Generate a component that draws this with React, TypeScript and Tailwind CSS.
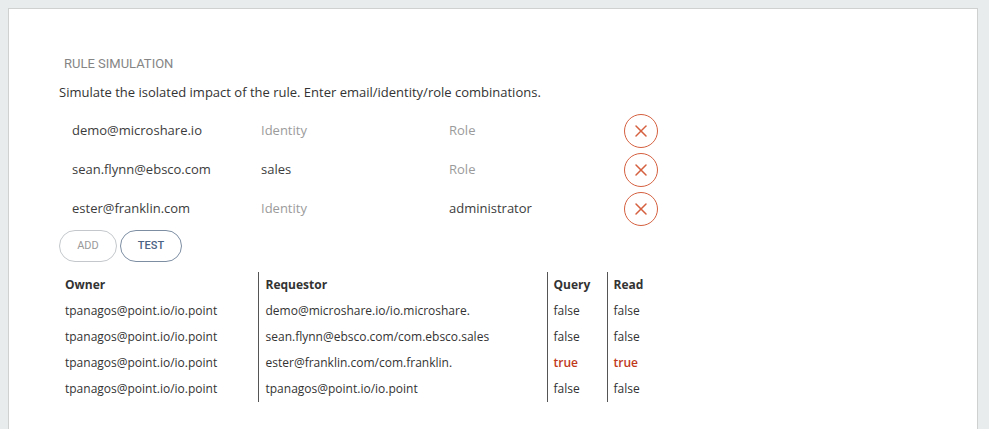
import { X } from 'lucide-react';

interface SimRow {
    email: string;
    identity: string;
    role: string;
}

const simRows: SimRow[] = [
    { email: 'demo@microshare.io', identity: '', role: '' },
    { email: 'sean.flynn@ebsco.com', identity: 'sales', role: '' },
    { email: 'ester@franklin.com', identity: '', role: 'administrator' },
];

const results = [
    { owner: 'tpanagos@point.io/io.point', requestor: 'demo@microshare.io/io.microshare.', query: false, read: false },
    { owner: 'tpanagos@point.io/io.point', requestor: 'sean.flynn@ebsco.com/com.ebsco.sales', query: false, read: false },
    { owner: 'tpanagos@point.io/io.point', requestor: 'ester@franklin.com/com.franklin.', query: true, read: true },
    { owner: 'tpanagos@point.io/io.point', requestor: 'tpanagos@point.io/io.point', query: false, read: false },
];

function Field({ value, placeholder, width }: { value: string; placeholder: string; width: string }) {
    return (
        <div className={`${width} shrink-0 ${value ? 'text-[#3c3c3c]' : 'text-[#9b9b9b]'}`}>
            {value || placeholder}
        </div>
    );
}

function BoolCell({ value }: { value: boolean }) {
    return <span className={value ? 'text-[#c0391b] font-semibold' : ''}>{value ? 'true' : 'false'}</span>;
}

export default function App() {
    return (
        <div className="min-h-[429px] h-[429px] overflow-hidden bg-[#e9ecec] pt-[8px] pl-[8px] pr-[11px] font-['Open_Sans',sans-serif]">
            <div className="h-[440px] border border-[#cfd1d1] bg-white pl-[50px] pt-[47px]">
                {/* Header */}
                <div className="ml-[5px] font-['Roboto',sans-serif] text-[13px] leading-[16px] text-[#858585] uppercase">
                    Rule Simulation
                </div>
                <p className="mt-[11px] text-[13px] leading-[18px] text-[#333]">
                    Simulate the isolated impact of the rule. Enter email/identity/role combinations.
                </p>

                {/* Email / identity / role rows */}
                <div className="mt-[10px] text-[13px]">
                    {simRows.map((row) => (
                        <div key={row.email} className="flex h-[39px] items-center pl-[13px]">
                            <Field value={row.email} placeholder="Email" width="w-[189px]" />
                            <Field value={row.identity} placeholder="Identity" width="w-[188px]" />
                            <Field value={row.role} placeholder="Role" width="w-[175px]" />
                            <button className="flex h-[34px] w-[34px] items-center justify-center rounded-full border border-[#d5603f] text-[#d5603f]">
                                <X className="h-[20px] w-[20px]" strokeWidth={1.8} />
                            </button>
                        </div>
                    ))}
                </div>

                {/* Actions */}
                <div className="mt-[2px] flex gap-[3px] font-['Roboto',sans-serif]">
                    <button className="h-[32px] w-[58px] rounded-full border border-[#c4c8cc] text-[11px] text-[#9a9a9a]">
                        ADD
                    </button>
                    <button className="h-[32px] w-[62px] rounded-full border-[1.5px] border-[#7d8ea3] text-[11px] font-medium text-[#4b6384]">
                        TEST
                    </button>
                </div>

                {/* Results */}
                <table className="mt-[10px] border-collapse text-[12px] text-[#333]">
                    <thead>
                        <tr className="h-[26px]">
                            <th className="w-[199px] px-[6px] text-left font-bold">Owner</th>
                            <th className="w-[289px] border-l border-[#555] px-[7px] text-left font-bold">Requestor</th>
                            <th className="w-[60px] border-l border-[#555] px-[6px] text-left font-bold">Query</th>
                            <th className="w-[60px] border-l border-[#555] px-[6px] text-left font-bold">Read</th>
                        </tr>
                    </thead>
                    <tbody>
                        {results.map((r, i) => (
                            <tr key={i} className="h-[26px]">
                                <td className="px-[6px]">{r.owner}</td>
                                <td className="border-l border-[#555] px-[7px]">{r.requestor}</td>
                                <td className="border-l border-[#555] px-[6px]">
                                    <BoolCell value={r.query} />
                                </td>
                                <td className="border-l border-[#555] px-[6px]">
                                    <BoolCell value={r.read} />
                                </td>
                            </tr>
                        ))}
                    </tbody>
                </table>
            </div>
        </div>
    );
}
